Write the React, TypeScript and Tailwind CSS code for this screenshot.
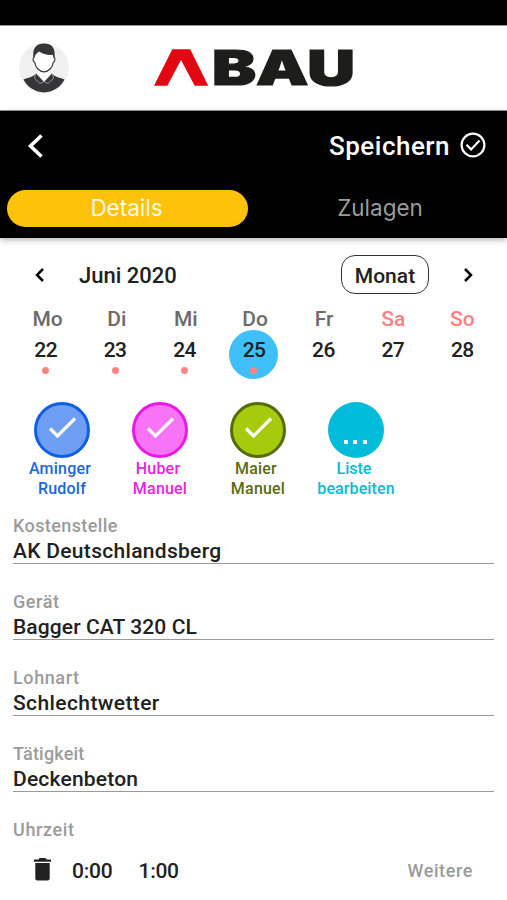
import { clsx } from 'clsx'

const days = [
  { name: 'Mo', date: 22, entry: true },
  { name: 'Di', date: 23, entry: true },
  { name: 'Mi', date: 24, entry: true },
  { name: 'Do', date: 25, entry: true, selected: true },
  { name: 'Fr', date: 26 },
  { name: 'Sa', date: 27, weekend: true },
  { name: 'So', date: 28, weekend: true },
]

const workers = [
  { first: 'Aminger', last: 'Rudolf', circle: 'bg-[#6f9ff5] border-[#0f5ee6]', text: 'text-[#1c66e0]' },
  { first: 'Huber', last: 'Manuel', circle: 'bg-[#f774f7] border-[#e81ae2]', text: 'text-[#ea1fe6]' },
  { first: 'Maier', last: 'Manuel', circle: 'bg-[#a5cb0c] border-[#556b0a]', text: 'text-[#5a6b10]' },
]

const fields = [
  { label: 'Kostenstelle', value: 'AK Deutschlandsberg', labelCls: 'tracking-[0.4px]', valueCls: 'tracking-[0.3px]' },
  { label: 'Gerät', value: 'Bagger CAT 320 CL', labelCls: 'tracking-[0.6px]', valueCls: 'tracking-[0.1px]' },
  { label: 'Lohnart', value: 'Schlechtwetter', labelCls: 'tracking-[0.6px]', valueCls: 'tracking-[0.4px]' },
  { label: 'Tätigkeit', value: 'Deckenbeton', labelCls: 'tracking-[0.2px]', valueCls: 'tracking-[0.2px]' },
]

function UserIcon() {
  return (
    <svg className="ml-[19px] h-[50px] w-[50px]" viewBox="0 0 50 50">
      <circle cx="25" cy="25" r="25" fill="#f0f0f0" />
      <path d="M19 25h12v6l-6 7-6-7z" fill="#fff" />
      <path
        d="M15 14.5c-1.500.2-1.200 4 .8 5 .6 5 4.600 9.300 9.200 9.300s8.600-4.300 9.200-9.300c2-1 2.300-4.800.8-5L33 7H17z"
        fill="#fff"
        stroke="#363639"
        strokeWidth="1.2"
      />
      <path
        d="M14.500 15C13 6 16.500.5 25 .5S36.600 5.500 35.500 15l-1.300-3.200c-6 .4-10.700-.8-14-3.300-1.700 1.500-3.800 2.300-5.700 6.500z"
        fill="#363639"
      />
      <path d="M4.500 36.500c4.500-2 9.500-2.300 12.500-6L25 39l8-8.500c3 3.700 8 4 12.500 6A23.500 23.500 0 0 1 25 49.500 23.500 23.500 0 0 1 4.500 36.500z" fill="#363639" />
      <path d="M16.500 31l-1 4.500 5.500 5 4-2 4 2 5.500-5-1-4.500" fill="none" stroke="#b8b8b8" strokeWidth=".7" />
    </svg>
  )
}

function Logo() {
  return (
    <svg className="ml-[84px] h-[66px] w-[204px]" viewBox="153 35 204 66">
      <path d="M154 85.700 172.300 49.300h17.900l18 36.400h-13.500L181 60l-13.700 25.700z" fill="#e30613" />
      <text
        x="212"
        y="85"
        textLength="143"
        lengthAdjust="spacingAndGlyphs"
        fill="#1d1d1b"
        stroke="#1d1d1b"
        strokeWidth="1.2"
        className="font-['Inter',sans-serif] text-[48px] font-black"
      >
        BAU
      </text>
    </svg>
  )
}

function Chevron({ className, d = 'M8 1 2 7l6 6' }: { className?: string; d?: string }) {
  return (
    <svg className={className} viewBox="0 0 10 14" fill="none" stroke="currentColor" strokeWidth="2.500">
      <path d={d} />
    </svg>
  )
}

export default function App() {
  return (
    <div className="flex h-[900px] w-[507px] flex-col overflow-hidden bg-white font-['Roboto',sans-serif] font-medium text-[#212121]">
      <div className="h-[25px] shrink-0 bg-black" />

      <header className="flex h-[86px] shrink-0 items-center border-y border-[#999] bg-white">
        <UserIcon />
        <Logo />
      </header>

      {/* Action bar and tabs */}
      <div className="flex h-[127px] shrink-0 flex-col bg-black shadow-[0_2px_6px_rgba(0,0,0,0.3)]">
        <div className="flex h-[70px] items-center justify-between pl-[27px] pr-[21px] text-white">
          <svg className="h-6 w-4" viewBox="0 0 16 24" fill="none" stroke="currentColor" strokeWidth="3.600">
            <path d="M14.500 1.500 3.500 12l11 10.500" />
          </svg>
          <div className="flex items-center gap-[10px]">
            <span className="text-[26px] leading-[30px] tracking-[0.500px]">Speichern</span>
            <svg className="-mt-[2px] h-[26px] w-[26px]" viewBox="0 0 26 26" fill="none" stroke="currentColor" strokeWidth="2.200">
              <circle cx="13" cy="13" r="11.400" />
              <path d="m6.500 12.800 4.600 4.600 8.400-9" />
            </svg>
          </div>
        </div>
        <div className="flex font-['Inter',sans-serif] text-[22.500px] font-normal leading-[36px]">
          <div className="ml-[7px] mt-[9px] h-[37px] w-[241px] rounded-full bg-[#ffc20a] pr-[2px] text-center text-[#fff9e0]">
            Details
          </div>
          <div className="mt-[9px] h-[37px] flex-1 pl-[5px] text-center text-[#9c9c9c]">Zulagen</div>
        </div>
      </div>

      {/* Month navigation */}
      <div className="mt-[17px] flex h-[39px] shrink-0 items-center pl-[35px] pr-[34px]">
        <Chevron className="h-[14px] w-[10px] text-black" />
        <span className="ml-[34px] mt-[3px] text-[22px] leading-[30px]">Juni 2020</span>
        <button className="ml-auto h-[39px] w-[88px] rounded-[14px] border-[1.500px] border-[#333] pt-[2px] text-[21px] leading-[36px]">
          Monat
        </button>
        <Chevron className="ml-[34px] h-[14px] w-[10px] text-black" d="m2 1 6 6-6 6" />
      </div>

      {/* Week */}
      <div className="mt-[12px] grid h-[24px] shrink-0 grid-cols-7 pl-[13px] pr-[10px] text-center text-[21px] leading-[26px]">
        {days.map(d => (
          <span key={d.name} className={d.weekend ? 'text-[#ff8080]' : 'text-[#6b6b6b]'}>
            {d.name}
          </span>
        ))}
      </div>
      <div className="grid h-[50px] shrink-0 grid-cols-7 pl-[11px] pr-[10px]">
        {days.map(d => (
          <div
            key={d.date}
            className={clsx(
              'flex h-[49px] w-[49px] flex-col items-center justify-self-center rounded-full',
              d.selected && 'bg-[#40c0fb]',
            )}
          >
            <span className="mt-[7px] text-[21px] leading-[26px] tracking-[-0.600px]">{d.date}</span>
            {d.entry && <span className="mt-[4px] h-[7px] w-[7px] rounded-full bg-[#ff8585]" />}
          </div>
        ))}
      </div>

      {/* Workers */}
      <div className="mt-[22px] flex h-[96px] shrink-0 pl-[13px] text-[16px] leading-[19.500px]">
        {workers.map(w => (
          <div key={w.first} className={clsx('flex w-[98px] flex-col items-center tracking-[0.200px]', w.text)}>
            <div className={clsx('mb-px h-[56px] w-[56px] rounded-full border-[3.500px]', w.circle)}>
              <svg className="h-full w-full" viewBox="3 3 50 50" fill="none" stroke="#fff" strokeWidth="3.200">
                <path d="m16 26.500 7.500 7.500L41 16.500" />
              </svg>
            </div>
            <span className="pr-1">{w.first}</span>
            <span>{w.last}</span>
          </div>
        ))}
        <div className="flex w-[98px] flex-col items-center text-[#06bbd6]">
          <div className="mb-px flex h-[56px] w-[56px] items-end justify-center gap-[5.500px] rounded-full bg-[#00bbd9] pb-[14px] pr-[2px]">
            <i className="h-1 w-1 bg-white" />
            <i className="h-1 w-1 bg-white" />
            <i className="h-1 w-1 bg-white" />
          </div>
          <span className="pr-1">Liste</span>
          <span className="tracking-[0.100px]">bearbeiten</span>
        </div>
      </div>

      {/* Form */}
      <div className="mt-[2px] px-[13px]">
        {fields.map(f => (
          <div key={f.label} className="mb-[12px] flex h-[63.900px] flex-col">
            <div className={clsx('mt-[13px] h-[24px] text-[18px] leading-[26px] text-[#9b9b9b]', f.labelCls)}>{f.label}</div>
            <div className={clsx('h-[27px] border-b-[1.500px] border-[#9a9a9a] text-[21px] leading-[28px]', f.valueCls)}>
              {f.value}
            </div>
          </div>
        ))}
        <div className="pt-[13px] text-[18px] leading-[26px] tracking-[0.600px] text-[#9b9b9b]">Uhrzeit</div>
      </div>
      <div className="mt-[14px] flex h-[28px] items-center pl-[34px] pr-[34px] text-[21px] leading-[28px]">
        <svg className="-mt-[2px] h-[23px] w-[17px]" viewBox="0 0 17 23" fill="currentColor">
          <path d="M0 1.500h4.500L5.500 0h6l1 1.500H17v2.200H0zM1.300 5h14.400v15.500a2 2 0 0 1-2 2H3.300a2 2 0 0 1-2-2z" />
        </svg>
        <span className="ml-[21px] tracking-[-0.200px]">0:00</span>
        <span className="ml-[26px] tracking-[-0.300px]">1:00</span>
        <span className="ml-auto text-[18px] tracking-[0.600px] text-[#9b9b9b]">Weitere</span>
      </div>
    </div>
  )
}
